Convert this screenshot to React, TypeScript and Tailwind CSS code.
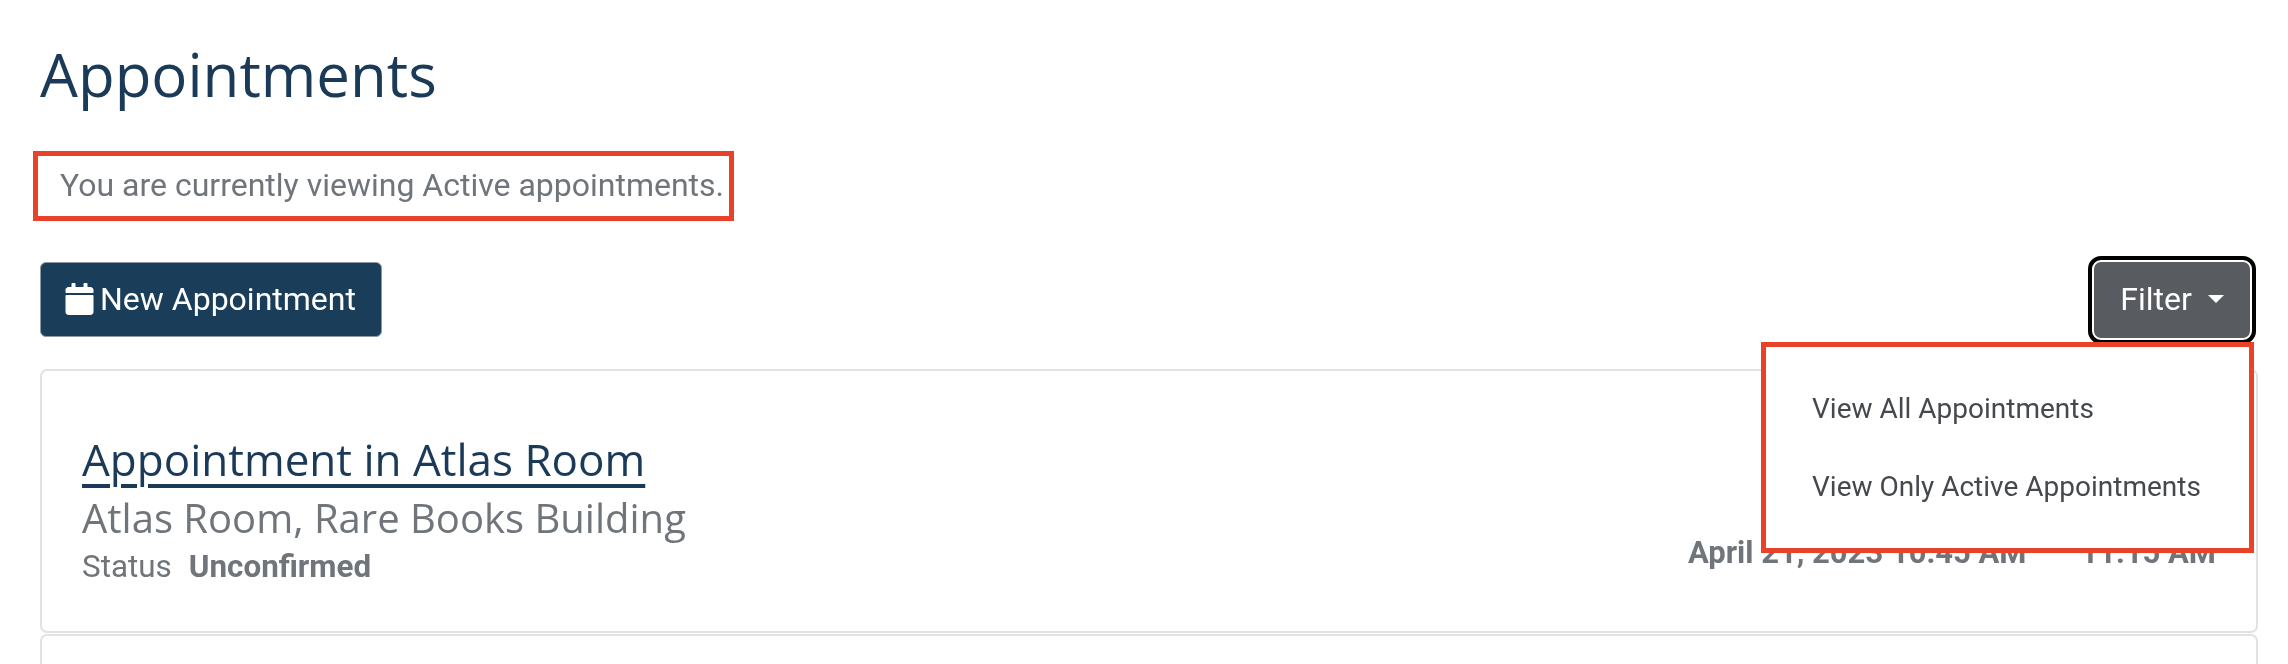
import { FaCalendar } from "react-icons/fa";

const roboto = "font-['Roboto',sans-serif]";
const openSans = "font-['Open_Sans',sans-serif]";

export default function App() {
  return (
    <div className={`h-[664px] w-[2288px] overflow-hidden bg-white pl-10 pr-[30px] ${roboto}`}>
      <h1 className={`${openSans} pt-[36px] text-[60px] font-normal leading-[76px] text-[#1a3a58] blur-[0.5px]`}>Appointments</h1>
      <div className="-ml-[7px] mt-[39px] flex h-[70px] w-[701px] items-center border-[5px] border-[#e8432a] pl-[22px] pb-[2px] text-[32px] text-[#6f757b]">
        <span className="blur-[0.5px]">You are currently viewing Active appointments.</span>
      </div>
      <div className="mt-[41px] flex items-start justify-between">
        <button className="flex h-[75px] w-[342px] items-center gap-[6px] rounded-[6px] border border-[#8c9aa6] bg-[#1a3d5a] pl-[24px] pb-[2px] text-[32px] text-white">
          <FaCalendar className="h-[32px] w-[29px] blur-[0.4px]" />
          <span className="blur-[0.5px]">New Appointment</span>
        </button>
        <div className="relative mr-[8px] h-[76px] w-[156px]">
          <button className="flex h-full w-full items-center justify-center gap-[16px] rounded-[7px] bg-[#585b60] pb-[2px] text-[32px] text-white outline-[4px] outline-offset-[2px] outline-black">
            <span className="blur-[0.5px]">Filter</span>
            <span className="h-0 w-0 border-x-[8px] border-t-[8px] border-x-transparent border-t-white" />
          </button>
          <div className="absolute right-[-4px] top-[80px] z-10 flex h-[211px] w-[493px] flex-col gap-[35px] border-[5px] border-[#e8432a] bg-white pl-[46px] pt-[40px] text-[28px] leading-[43px] text-[#45494d]">
            <div className="blur-[0.5px]">View All Appointments</div>
            <div className="blur-[0.5px]">View Only Active Appointments</div>
          </div>
        </div>
      </div>
      <div className="relative mt-[31px] flex h-[264px] items-end justify-between rounded-[7px] border-[2px] border-[#e2e2e2] pb-[45px] pl-[40px] pr-[40px]">
        <div className="flex flex-col">
          <a className={`${openSans} -mt-[2px] text-[44px] font-normal leading-[58px] text-[#1a3a58] underline decoration-[4px] underline-offset-[8px] blur-[0.5px]`}>Appointment in Atlas Room</a>
          <div className={`${openSans} text-[40px] leading-[60px] text-[#6f757b] blur-[0.5px]`}>Atlas Room, Rare Books Building</div>
          <div className="flex gap-[17px] text-[31.4px] leading-[38px] text-[#6f757b] blur-[0.5px]">
            <span>Status</span>
            <span className="font-bold">Unconfirmed</span>
          </div>
        </div>
        <div className="mb-[14px] flex gap-[54px] text-[31px] font-bold leading-[38px] text-[#6f757b] blur-[0.5px]">
          <span>April 21, 2023 10:45 AM</span>
          <span>11:15 AM</span>
        </div>
      </div>
      <div className="mt-[1px] h-[60px] rounded-t-[7px] border-[2px] border-b-0 border-[#e2e2e2]" />
    </div>
  );
}
